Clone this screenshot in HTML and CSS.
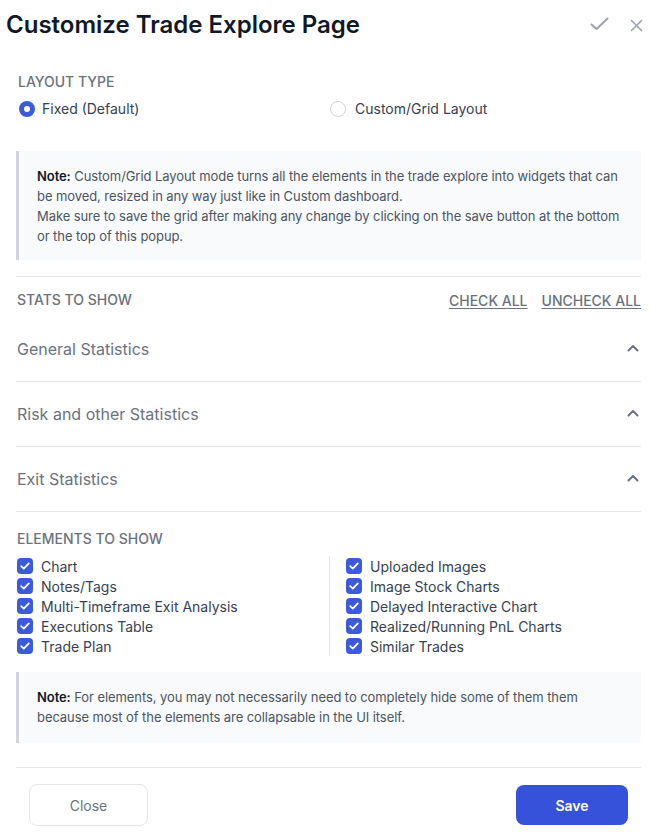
FILE: index.html
```html
<!DOCTYPE html>
<html>
<head>
<meta charset="utf-8">
<link rel="stylesheet" href="styles.css">
</head>
<body>
<div class="modal">
  <div class="header">
    <h1 class="title">Customize Trade Explore Page</h1>
    <div class="header-actions">
      <svg class="icon-check" width="19" height="14" viewBox="0 0 19 14"><path d="M1.5 7.5 L6.5 12 L17.5 1.5" fill="none" stroke="#9ca3af" stroke-width="2" stroke-linecap="round" stroke-linejoin="round"/></svg>
      <svg class="icon-x" width="13" height="13" viewBox="0 0 13 13"><path d="M1.5 1.5 L11.5 11.5 M11.5 1.5 L1.5 11.5" fill="none" stroke="#9ca3af" stroke-width="1.6" stroke-linecap="round"/></svg>
    </div>
  </div>

  <div class="content">
    <div class="label-upper first-label">LAYOUT TYPE</div>
    <div class="radio-row">
      <label class="radio-opt"><span class="radio checked"></span>Fixed (Default)</label>
      <label class="radio-opt"><span class="radio"></span>Custom/Grid Layout</label>
    </div>

    <div class="note note-1">
      <p><b>Note:</b> Custom/Grid Layout mode turns all the elements in the trade explore into widgets that can be moved, resized in any way just like in Custom dashboard.</p>
      <p>Make sure to save the grid after making any change by clicking on the save button at the bottom or the top of this popup.</p>
    </div>

    <div class="divider divider-1"></div>

    <div class="stats-head">
      <div class="label-upper">STATS TO SHOW</div>
      <div class="links">
        <a class="link">CHECK ALL</a>
        <a class="link">UNCHECK ALL</a>
      </div>
    </div>

    <div class="accordion">
      <div class="acc-item"><span>General Statistics</span><svg class="chev" width="12" height="8" viewBox="0 0 12 8"><path d="M1.5 6.5 L6 2 L10.5 6.5" fill="none" stroke="#6b7280" stroke-width="2" stroke-linecap="round" stroke-linejoin="round"/></svg></div>
      <div class="acc-item"><span>Risk and other Statistics</span><svg class="chev" width="12" height="8" viewBox="0 0 12 8"><path d="M1.5 6.5 L6 2 L10.5 6.5" fill="none" stroke="#6b7280" stroke-width="2" stroke-linecap="round" stroke-linejoin="round"/></svg></div>
      <div class="acc-item"><span>Exit Statistics</span><svg class="chev" width="12" height="8" viewBox="0 0 12 8"><path d="M1.5 6.5 L6 2 L10.5 6.5" fill="none" stroke="#6b7280" stroke-width="2" stroke-linecap="round" stroke-linejoin="round"/></svg></div>
    </div>

    <div class="label-upper elements-head">ELEMENTS TO SHOW</div>
    <div class="elements">
      <div class="col col-left">
        <label class="cb-row"><span class="cb"><svg width="10" height="8" viewBox="0 0 10 8"><path d="M1.2 4.2 L3.8 6.6 L8.8 1.4" fill="none" stroke="#fff" stroke-width="1.7" stroke-linecap="round" stroke-linejoin="round"/></svg></span>Chart</label>
        <label class="cb-row"><span class="cb"><svg width="10" height="8" viewBox="0 0 10 8"><path d="M1.2 4.2 L3.8 6.6 L8.8 1.4" fill="none" stroke="#fff" stroke-width="1.7" stroke-linecap="round" stroke-linejoin="round"/></svg></span>Notes/Tags</label>
        <label class="cb-row"><span class="cb"><svg width="10" height="8" viewBox="0 0 10 8"><path d="M1.2 4.2 L3.8 6.6 L8.8 1.4" fill="none" stroke="#fff" stroke-width="1.7" stroke-linecap="round" stroke-linejoin="round"/></svg></span>Multi-Timeframe Exit Analysis</label>
        <label class="cb-row"><span class="cb"><svg width="10" height="8" viewBox="0 0 10 8"><path d="M1.2 4.2 L3.8 6.6 L8.8 1.4" fill="none" stroke="#fff" stroke-width="1.7" stroke-linecap="round" stroke-linejoin="round"/></svg></span>Executions Table</label>
        <label class="cb-row"><span class="cb"><svg width="10" height="8" viewBox="0 0 10 8"><path d="M1.2 4.2 L3.8 6.6 L8.8 1.4" fill="none" stroke="#fff" stroke-width="1.7" stroke-linecap="round" stroke-linejoin="round"/></svg></span>Trade Plan</label>
      </div>
      <div class="col col-right">
        <label class="cb-row"><span class="cb"><svg width="10" height="8" viewBox="0 0 10 8"><path d="M1.2 4.2 L3.8 6.6 L8.8 1.4" fill="none" stroke="#fff" stroke-width="1.7" stroke-linecap="round" stroke-linejoin="round"/></svg></span>Uploaded Images</label>
        <label class="cb-row"><span class="cb"><svg width="10" height="8" viewBox="0 0 10 8"><path d="M1.2 4.2 L3.8 6.6 L8.8 1.4" fill="none" stroke="#fff" stroke-width="1.7" stroke-linecap="round" stroke-linejoin="round"/></svg></span>Image Stock Charts</label>
        <label class="cb-row"><span class="cb"><svg width="10" height="8" viewBox="0 0 10 8"><path d="M1.2 4.2 L3.8 6.6 L8.8 1.4" fill="none" stroke="#fff" stroke-width="1.7" stroke-linecap="round" stroke-linejoin="round"/></svg></span>Delayed Interactive Chart</label>
        <label class="cb-row"><span class="cb"><svg width="10" height="8" viewBox="0 0 10 8"><path d="M1.2 4.2 L3.8 6.6 L8.8 1.4" fill="none" stroke="#fff" stroke-width="1.7" stroke-linecap="round" stroke-linejoin="round"/></svg></span>Realized/Running PnL Charts</label>
        <label class="cb-row"><span class="cb"><svg width="10" height="8" viewBox="0 0 10 8"><path d="M1.2 4.2 L3.8 6.6 L8.8 1.4" fill="none" stroke="#fff" stroke-width="1.7" stroke-linecap="round" stroke-linejoin="round"/></svg></span>Similar Trades</label>
      </div>
    </div>

    <div class="note note-2">
      <p><b>Note:</b> For elements, you may not necessarily need to completely hide some of them them because most of the elements are collapsable in the UI itself.</p>
    </div>

    <div class="divider divider-2"></div>

    <div class="footer">
      <button class="btn btn-close">Close</button>
      <button class="btn btn-save">Save</button>
    </div>
  </div>
</div>
</body>
</html>
```

FILE: styles.css
```css
* { box-sizing: border-box; }
html, body { margin: 0; padding: 0; background: #fff; }
body { font-family: Inter, "Noto Sans", sans-serif; color: #374151; }

.modal { width: 656px; }

.header {
  height: 48px;
  display: flex;
  align-items: center;
  justify-content: space-between;
  padding: 0 13px 0 6px;
}
.title {
  margin: 0;
  font-family: Inter, sans-serif;
  font-size: 24px;
  font-weight: 600;
  color: #111827;
}
.header-actions { display: flex; align-items: center; gap: 21px; }
.icon-check { margin-top: -1px; }
.icon-x { margin-top: 2px; }

.content { padding: 0 15px 0 16px; }

.label-upper {
  font-size: 14px;
  line-height: 16px;
  font-weight: 500;
  color: #6b7280;
}
.first-label { margin-top: 26px; padding-left: 2px; }

.radio-row {
  display: grid;
  grid-template-columns: 311px 1fr;
  margin-top: 9px;
  height: 20px;
}
.radio-opt {
  display: flex;
  align-items: center;
  gap: 7px;
  font-size: 14px;
  line-height: 20px;
  color: #374151;
  padding-left: 3px;
}
.radio {
  width: 16px; height: 16px;
  border-radius: 50%;
  border: 1px solid #d1d5db;
  background: #fff;
  flex: none;
}
.radio.checked { border: 5px solid #3b5bdb; }
.radio-opt + .radio-opt .radio { margin-right: 2px; }

.note {
  background: #f9fafb;
  border-left: 3px solid #d1d5db;
  padding: 15px 13px 14px 18px;
  font-family: Inter, sans-serif;
  font-size: 13px;
  letter-spacing: -0.08px;
  line-height: 20px;
  color: #4b5563;
}
.note p { margin: 0; }
.note b { color: #111827; font-weight: 600; }
.note-1 { margin-top: 32px; }
.note-2 { margin-top: 16px; padding-bottom: 16px; }

.divider { height: 1px; background: #e5e7eb; }
.divider-1 { margin-top: 16px; }
.divider-2 { margin-top: 24px; }

.stats-head {
  display: flex;
  justify-content: space-between;
  align-items: center;
  margin-top: 15px;
  height: 16px;
}
.stats-head .label-upper { padding-left: 1px; }
.links { display: flex; gap: 14px; }
.link {
  font-size: 14px;
  font-weight: 500;
  color: #6b7280;
  text-decoration: underline;
  text-underline-offset: 2px;
}

.accordion { margin-top: 9px; }
.acc-item {
  height: 65px;
  border-bottom: 1px solid #e5e7eb;
  display: flex;
  align-items: center;
  justify-content: space-between;
  padding: 0 1px 0 1px;
  font-size: 16px;
  color: #6b7280;
}
.chev { margin-right: 1px; margin-top: -2px; }

.elements-head { margin-top: 19px; padding-left: 1px; }

.elements {
  display: grid;
  grid-template-columns: 313px 1fr;
  margin-top: 9px;
}
.col { display: flex; flex-direction: column; }
.col-left { padding-left: 1px; }
.col-right { border-left: 1px solid #e5e7eb; padding-left: 16px; }
.cb-row {
  display: flex;
  align-items: center;
  gap: 8px;
  height: 20px;
  font-size: 14px;
  color: #374151;
}
.cb {
  width: 16px; height: 16px;
  border-radius: 4px;
  background: #3b5bdb;
  display: flex;
  align-items: center;
  justify-content: center;
  flex: none;
}

.footer {
  display: flex;
  justify-content: space-between;
  align-items: center;
  padding: 16px 13px 0 13px;
}
.btn {
  font-family: Inter, sans-serif;
  font-size: 14px;
  border-radius: 8px;
  cursor: pointer;
}
.btn-close {
  width: 119px; height: 42px;
  background: #fff;
  border: 1px solid #e5e7eb;
  color: #6b7280;
}
.btn-save {
  width: 112px; height: 40px;
  background: #3652db;
  border: none;
  color: #fff;
  font-weight: 600;
}
```
